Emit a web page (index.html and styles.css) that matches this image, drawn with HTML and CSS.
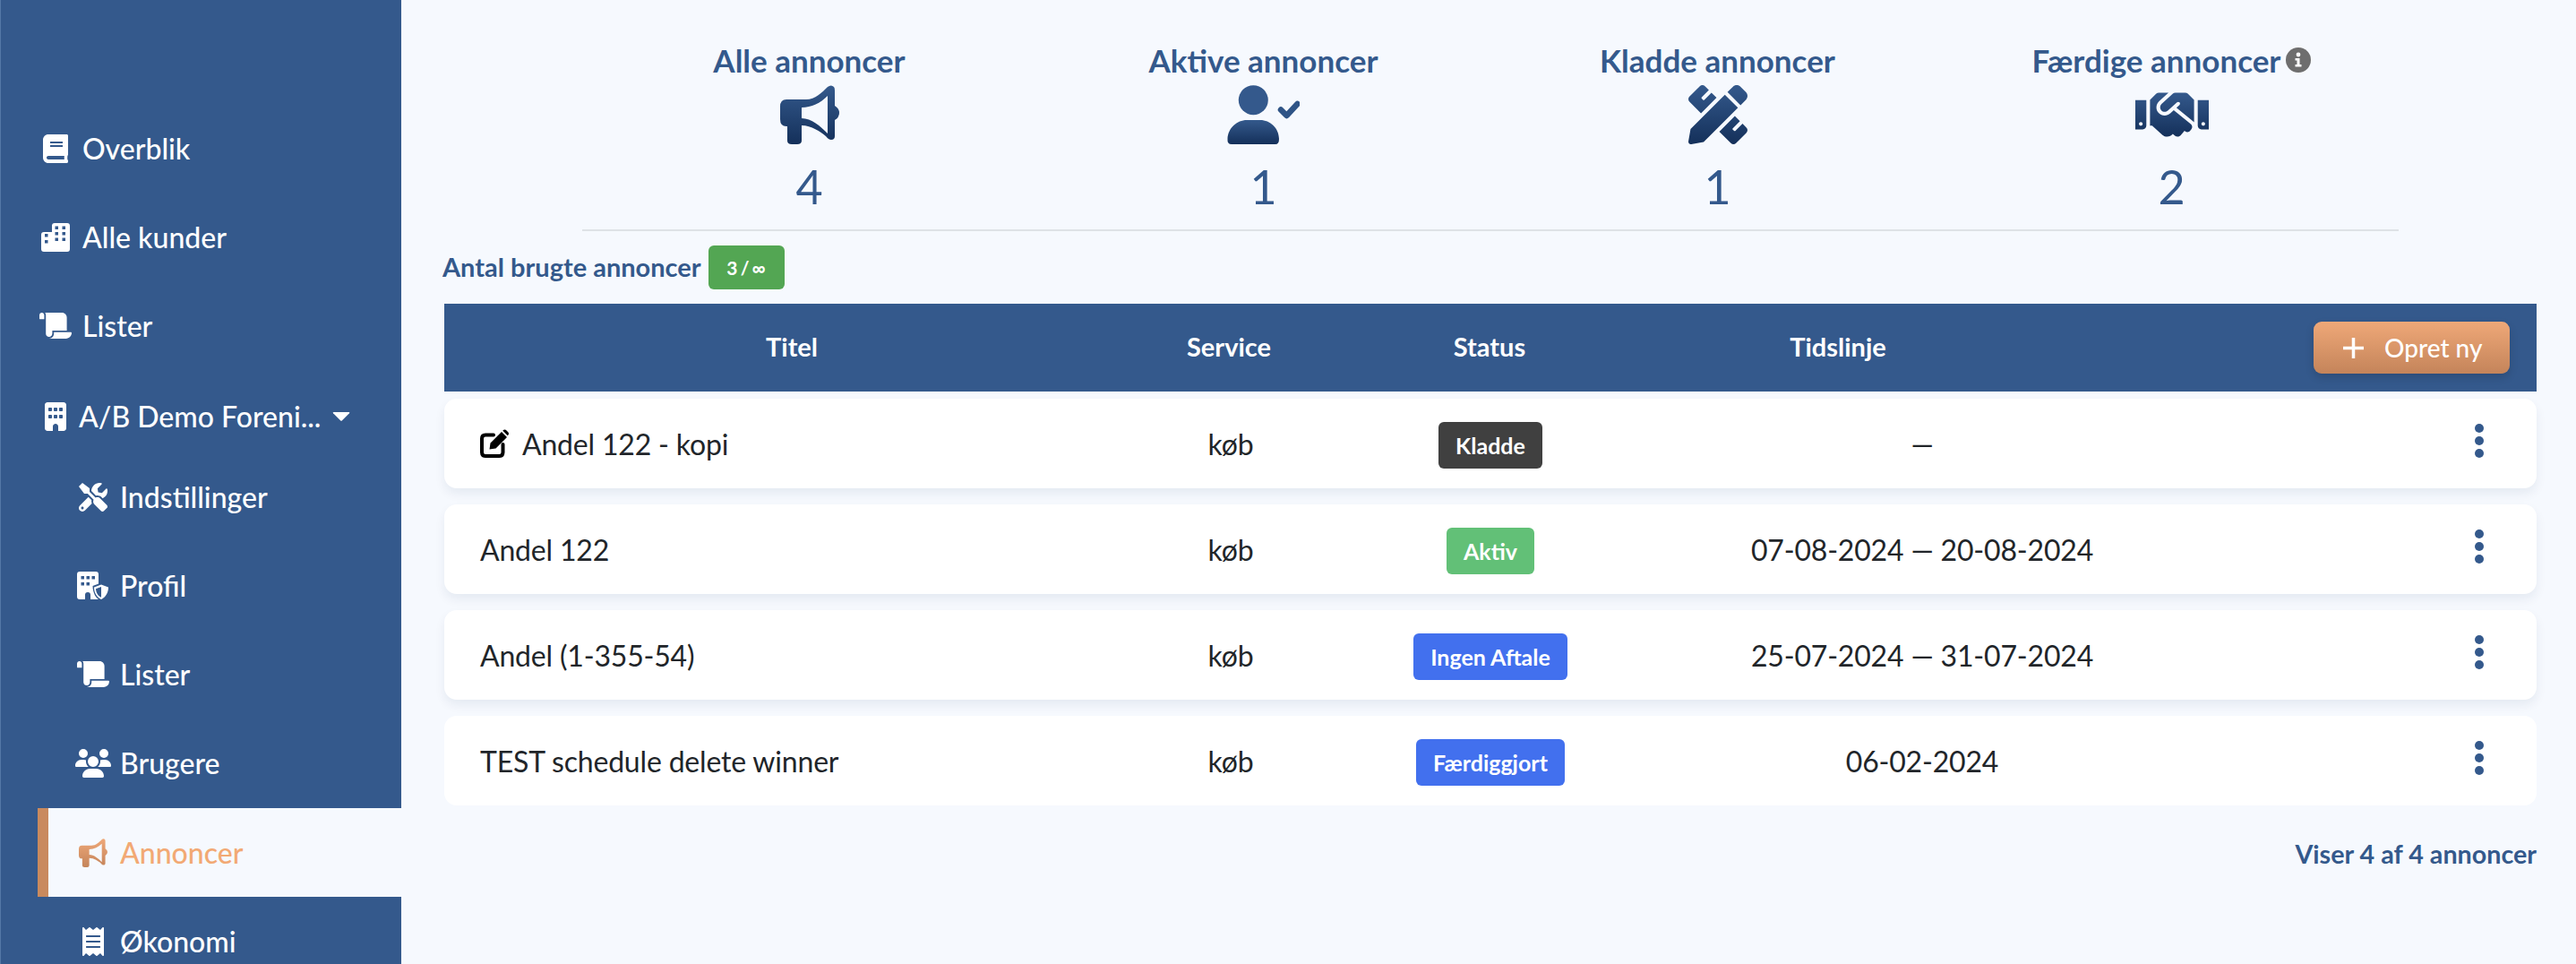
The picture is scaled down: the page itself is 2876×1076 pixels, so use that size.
FILE: index.html
```html
<!DOCTYPE html>
<html lang="da">
<head>
<meta charset="utf-8">
<title>Annoncer</title>
<link rel="stylesheet" href="styles.css">
</head>
<body>
<svg class="defs" width="0" height="0" aria-hidden="true">
  <defs>
    <linearGradient id="blue" x1="0" y1="0" x2="0" y2="1"><stop offset="0" stop-color="#34598c"/><stop offset="1" stop-color="#14305a"/></linearGradient>
    <linearGradient id="orange" x1="0" y1="0" x2="0" y2="1"><stop offset="0" stop-color="#efa878"/><stop offset="1" stop-color="#c4845a"/></linearGradient>
  </defs>
</svg>
<div class="app">
  <aside class="sidebar">
    <nav class="nav">
      <a class="item"><span class="cell"><svg class="ic-book" viewBox="0 0 448 512"><path d="M448 360V24c0-13.3-10.7-24-24-24H96C43 0 0 43 0 96v320c0 53 43 96 96 96h328c13.3 0 24-10.7 24-24v-16c0-7.5-3.5-14.3-8.9-18.7-4.2-15.4-4.2-59.3 0-74.7 5.4-4.3 8.9-11.1 8.9-18.6zM128 134c0-3.3 2.7-6 6-6h212c3.3 0 6 2.7 6 6v20c0 3.3-2.7 6-6 6H134c-3.3 0-6-2.7-6-6v-20zm0 64c0-3.3 2.7-6 6-6h212c3.3 0 6 2.7 6 6v20c0 3.3-2.7 6-6 6H134c-3.3 0-6-2.7-6-6v-20zm253.4 250H96c-17.7 0-32-14.3-32-32 0-17.6 14.4-32 32-32h285.4c-1.9 17.1-1.9 46.9 0 64z"/></svg></span>Overblik</a>
      <a class="item"><span class="cell"><svg class="ic-city" viewBox="0 0 32 32"><path fill-rule="evenodd" d="M3 10H12V3Q12 0 15 0H29Q32 0 32 3V29Q32 32 29 32H3Q0 32 0 29V13Q0 10 3 10ZM4 12V15.5H7.5V12ZM4 19V22.500H7.500V19ZM15.500 3.500V7H19V3.500ZM23.500 3.500V7H27V3.500ZM15.500 10V13.500H19V10ZM23.500 10V13.500H27V10ZM15.500 16.500V20H19V16.500ZM23.500 16.500V20H27V16.500Z"/></svg></span>Alle kunder</a>
      <a class="item"><span class="cell"><svg class="ic-scroll" viewBox="0 0 640 512"><path d="M48 0C21.53 0 0 21.53 0 48v64c0 8.84 7.16 16 16 16h80V48C96 21.53 74.47 0 48 0zm208 412.57V352h288V96c0-52.94-43.06-96-96-96H111.59C121.74 13.41 128 29.92 128 48v368c0 38.87 34.66 69.65 74.35 63.12C234.22 474.3 256 444.46 256 412.57zM288 384v32c0 52.93-43.06 96-96 96h336c61.86 0 112-50.14 112-112 0-8.84-7.16-16-16-16H288z"/></svg></span>Lister</a>
      <a class="item item-group"><span class="cell"><svg class="ic-building" viewBox="0 0 384 512"><path d="M48 0C21.5 0 0 21.5 0 48V464c0 26.5 21.5 48 48 48h96V432c0-26.5 21.5-48 48-48s48 21.5 48 48v80h96c26.5 0 48-21.5 48-48V48c0-26.500-21.500-48-48-48H48zM64 240c0-8.800 7.200-16 16-16h32c8.800 0 16 7.200 16 16v32c0 8.800-7.200 16-16 16H80c-8.800 0-16-7.200-16-16V240zm112-16h32c8.800 0 16 7.200 16 16v32c0 8.800-7.200 16-16 16H176c-8.800 0-16-7.200-16-16V240c0-8.800 7.200-16 16-16zm80 16c0-8.800 7.200-16 16-16h32c8.800 0 16 7.200 16 16v32c0 8.800-7.200 16-16 16H272c-8.800 0-16-7.200-16-16V240zM80 96h32c8.800 0 16 7.200 16 16v32c0 8.800-7.200 16-16 16H80c-8.800 0-16-7.200-16-16V112c0-8.800 7.200-16 16-16zm80 16c0-8.800 7.200-16 16-16h32c8.800 0 16 7.200 16 16v32c0 8.800-7.200 16-16 16H176c-8.800 0-16-7.200-16-16V112zM272 96h32c8.800 0 16 7.200 16 16v32c0 8.800-7.200 16-16 16H272c-8.800 0-16-7.200-16-16V112c0-8.800 7.200-16 16-16z"/></svg></span>A/B Demo Foreni...<svg class="caret" viewBox="0 0 20 10"><path d="M1.500 0H18.500Q20 0 19 1.200L11 9.300Q10 10.300 9 9.300L1 1.200Q0 0 1.500 0Z"/></svg></a>
      <div class="sub">
        <a class="item"><span class="cell"><svg class="ic-tools" viewBox="0 0 512 512"><path d="M501.1 395.700L384 278.600c-23.100-23.100-57.600-27.600-85.400-13.900L192 158.100V96L64 0 0 64l96 128h62.100l106.600 106.600c-13.600 27.800-9.200 62.300 13.900 85.400l117.100 117.100c14.600 14.600 38.200 14.600 52.700 0l52.700-52.700c14.500-14.600 14.500-38.200 0-52.700zM331.700 225c28.300 0 54.900 11 74.900 31l19.400 19.400c15.800-6.900 30.800-16.500 43.800-29.500 37.100-37.100 49.700-89.300 37.900-136.700-2.200-9-13.500-12.100-20.100-5.500l-74.400 74.400-67.900-11.300L334 98.900l74.400-74.400c6.600-6.600 3.400-17.900-5.700-20.200-47.400-11.700-99.600.9-136.600 37.900-28.500 28.500-41.900 66.100-41.200 103.600l82.100 82.100c8.100-1.900 16.500-2.900 24.700-2.900zm-103.900 82l-56.700-56.700L18.700 402.800c-25 25-25 65.500 0 90.500s65.500 25 90.500 0l123.600-123.600c-7.600-19.900-9.900-41.600-5-62.700zM64 472c-13.200 0-24-10.800-24-24 0-13.300 10.700-24 24-24s24 10.700 24 24c0 13.200-10.700 24-24 24z"/></svg></span>Indstillinger</a>
        <a class="item"><span class="cell"><svg class="ic-profile" viewBox="0 0 36 31"><path fill-rule="evenodd" d="M3 0H21Q24 0 24 3V31H15V26Q15 23 12 23T9 26V31H3Q0 31 0 28V3Q0 0 3 0ZM4.500 5V8.500H8V5ZM10.500 5V8.500H14V5ZM16.500 5V8.500H20V5ZM4.500 12V15.500H8V12ZM10.500 12V15.500H14V12Z"/><path class="shield-back" d="M27 12.500L36.500 16C36.500 24 33 30 27 33C21 30 17.500 24 17.500 16Z"/><path d="M27 14.500L35 17.500C35 23.500 32 28.500 27 31C22 28.500 19 23.500 19 17.500ZM27 17L21 19.200C21.200 23.500 23.500 27 27 28.800Z" fill-rule="evenodd"/></svg></span>Profil</a>
        <a class="item"><span class="cell"><svg class="ic-scroll" viewBox="0 0 640 512"><path d="M48 0C21.53 0 0 21.53 0 48v64c0 8.84 7.16 16 16 16h80V48C96 21.53 74.47 0 48 0zm208 412.57V352h288V96c0-52.94-43.06-96-96-96H111.59C121.74 13.41 128 29.92 128 48v368c0 38.87 34.66 69.65 74.35 63.12C234.22 474.3 256 444.46 256 412.57zM288 384v32c0 52.93-43.06 96-96 96h336c61.86 0 112-50.14 112-112 0-8.84-7.16-16-16-16H288z"/></svg></span>Lister</a>
        <a class="item"><span class="cell"><svg class="ic-users" viewBox="0 0 640 512"><path d="M144 0a80 80 0 1 1 0 160A80 80 0 1 1 144 0zM512 0a80 80 0 1 1 0 160A80 80 0 1 1 512 0zM0 298.700C0 239.800 47.800 192 106.700 192h42.700c15.900 0 31 3.500 44.600 9.700c-1.300 7.200-1.900 14.700-1.900 22.300c0 38.200 16.800 72.500 43.300 96c-.2 0-.4 0-.7 0H21.300C9.600 320 0 310.400 0 298.700zM405.300 320c-.2 0-.4 0-.7 0c26.600-23.500 43.300-57.800 43.300-96c0-7.600-.7-15-1.900-22.300c13.600-6.300 28.700-9.700 44.600-9.700h42.700C592.200 192 640 239.800 640 298.700c0 11.800-9.600 21.300-21.300 21.300H405.300zM224 224a96 96 0 1 1 192 0 96 96 0 1 1 -192 0zM128 485.300C128 411.700 187.700 352 261.300 352H378.700C452.300 352 512 411.700 512 485.300c0 14.700-11.900 26.700-26.700 26.700H154.700c-14.700 0-26.700-11.900-26.700-26.700z"/></svg></span>Brugere</a>
        <a class="item item-active"><span class="cell"><svg class="ic-horn" viewBox="21 10 66 66"><path fill="url(#orange)" fill-rule="evenodd" d="M28 26H50C60 26 68 18 74 12Q78 9 81 12Q82 13 82 16V33Q87 36 87 41Q87 46 82 49V67Q82 71 78 71Q75 71 72 67C66 62 56 55 45 55V72Q45 76 40 76H34Q29 76 29 72V56H28Q21 56 21 48V34Q21 26 28 26ZM45 35V47C56 47 66 56 74 64V22C66 30 56 35 45 35Z"/></svg></span>Annoncer</a>
        <a class="item"><span class="cell"><svg class="ic-receipt" viewBox="0 0 384 512"><path d="M358.400 3.200L320 48 265.600 3.200a15.900 15.900 0 0 0-19.200 0L192 48 137.600 3.200a15.900 15.900 0 0 0-19.200 0L64 48 25.600 3.200C15-4.700 0 2.800 0 16v480c0 13.200 15 20.700 25.600 12.800L64 464l54.400 44.800a15.900 15.900 0 0 0 19.200 0L192 464l54.400 44.800a15.900 15.900 0 0 0 19.200 0L320 464l38.400 44.800c10.500 7.900 25.600.4 25.600-12.800V16c0-13.200-15-20.700-25.600-12.800zM320 360c0 4.400-3.600 8-8 8H72c-4.400 0-8-3.600-8-8v-16c0-4.400 3.600-8 8-8h240c4.400 0 8 3.600 8 8v16zm0-96c0 4.400-3.600 8-8 8H72c-4.400 0-8-3.600-8-8v-16c0-4.400 3.600-8 8-8h240c4.400 0 8 3.600 8 8v16zm0-96c0 4.400-3.600 8-8 8H72c-4.400 0-8-3.600-8-8v-16c0-4.400 3.600-8 8-8h240c4.400 0 8 3.600 8 8v16z"/></svg></span>Økonomi</a>
      </div>
    </nav>
  </aside>
  <main class="main">
    <section class="stats">
      <div class="stat">
        <div class="stat-title">Alle annoncer</div>
        <svg class="stat-icon w66" viewBox="21 10 66 66"><path fill="url(#blue)" fill-rule="evenodd" d="M28 26H50C60 26 68 18 74 12Q78 9 81 12Q82 13 82 16V33Q87 36 87 41Q87 46 82 49V67Q82 71 78 71Q75 71 72 67C66 62 56 55 45 55V72Q45 76 40 76H34Q29 76 29 72V56H28Q21 56 21 48V34Q21 26 28 26ZM45 35V47C56 47 66 56 74 64V22C66 30 56 35 45 35Z"/></svg>
        <div class="stat-num">4</div>
      </div>
      <div class="stat">
        <div class="stat-title">Aktive annoncer</div>
        <svg class="stat-icon w81" viewBox="19 10 81 66"><circle cx="48.300" cy="26.700" r="16.500" fill="#34598c"/><path fill="url(#blue)" d="M19.500 70C20 58 30 49 41 49H56C67 49 77 58 77 70Q77 76 73 76H24Q19 76 19.500 70Z"/><path class="check" d="M79 37.500L85.500 44L97.500 31"/></svg>
        <div class="stat-num">1</div>
      </div>
      <div class="stat">
        <div class="stat-title">Kladde annoncer</div>
        <svg class="stat-icon w66" viewBox="0 0 512 512"><path fill="url(#blue)" d="M109.460 244.040l134.580-134.560-44.120-44.120-61.680 61.680a7.919 7.919 0 0 1-11.210 0l-11.210-11.210c-3.100-3.100-3.100-8.120 0-11.210l61.680-61.680-33.640-33.650C131.470-3.100 111.390-3.100 99 9.290L9.290 99c-12.380 12.390-12.390 32.470 0 44.860l100.170 100.180zm388.470-116.200c18.760-18.760 18.750-49.170 0-67.930l-45.250-45.250c-18.760-18.760-49.180-18.760-67.950 0l-46.020 46.010 113.200 113.200 46.020-46.030zM316.080 82.710l-297 296.960L.32 487.110c-2.530 14.490 10.090 27.110 24.590 24.560l107.450-18.840 296.950-297-113.230-113.120zm186.630 285.430l-33.640-33.640-61.680 61.680c-3.100 3.100-8.120 3.100-11.210 0l-11.210-11.210c-3.090-3.100-3.090-8.120 0-11.210l61.680-61.680-44.140-44.140L267.930 402.500l100.210 100.200c12.390 12.390 32.470 12.390 44.860 0l89.710-89.700c12.380-12.390 12.380-32.470 0-44.860z"/></svg>
        <div class="stat-num">1</div>
      </div>
      <div class="stat">
        <div class="stat-title">Færdige annoncer<svg class="info" viewBox="0 0 28 28"><circle cx="14" cy="14" r="14" fill="#6e6e6e"/><circle cx="14" cy="8" r="2.400" fill="#fff"/><path fill="#fff" d="M10.500 12H15.500V19H17.500V21.500H10.500V19H12.500V14.500H10.500Z"/></svg></div>
        <svg class="stat-icon w82" viewBox="0 0 640 512"><path fill="url(#blue)" d="M434.700 64h-85.900c-8 0-15.700 3-21.600 8.400l-98.300 90c-.1.1-.2.3-.3.4-16.600 15.600-16.300 40.500-2.100 56 12.700 13.900 39.400 17.600 56.100 2.700.1-.1.3-.1.4-.2l79.900-73.200c6.500-5.900 16.700-5.500 22.600 1 6 6.500 5.500 16.600-1 22.600l-26.100 23.900L504 313.800c2.900 2.400 5.500 5 7.900 7.700V128l-54.600-54.600c-5.900-6-14.100-9.400-22.600-9.400zM544 128.200v223.900c0 17.700 14.300 32 32 32h64V128.200h-96zm48 223.900c-8.800 0-16-7.200-16-16s7.200-16 16-16 16 7.200 16 16-7.200 16-16 16zM0 384h64c17.700 0 32-14.300 32-32V128.200H0V384zm48-63.900c8.800 0 16 7.200 16 16s-7.200 16-16 16-16-7.200-16-16c0-8.900 7.200-16 16-16zm435.900 18.600L334.600 217.500l-30 27.500c-29.700 27.100-75.200 24.500-101.700-4.400-26.900-29.400-24.800-74.900 4.400-101.700L289.100 64h-83.800c-8.500 0-16.600 3.400-22.600 9.400L128 128v223.900h18.300l90.500 81.900c27.400 22.300 67.700 18.100 90-9.300l.2-.2 17.900 15.500c15.900 13 39.400 10.500 52.300-5.400l31.400-38.600 5.400 4.400c13.700 11.100 33.900 9.100 45-4.700l9.500-11.700c11.200-13.800 9.100-33.900-4.600-45.100z"/></svg>
        <div class="stat-num">2</div>
      </div>
    </section>
    <div class="usage"><span class="usage-label">Antal brugte annoncer</span><span class="usage-badge">3 / ∞</span></div>
    <div class="thead">
      <div class="th">Titel</div>
      <div class="th">Service</div>
      <div class="th">Status</div>
      <div class="th">Tidslinje</div>
      <button class="btn"><svg class="plus" viewBox="0 0 23 23"><path d="M11.500 0V23M0 11.500H23"/></svg>Opret ny</button>
    </div>
    <div class="rows">
      <div class="row">
        <div class="title"><svg class="ic-edit" viewBox="0 0 32 32"><path class="edit-box" d="M15 6.500H6Q2 6.500 2 10.500V26Q2 30 6 30H21.500Q25.500 30 25.500 26V17"/><path class="edit-pen" d="M10.500 22.500L11.500 15.500L24 3L30 9L17.500 21.500ZM25.500 1.500Q27.500 -0.500 29.500 1.500L31 3Q33 5 31 7L30.800 7.200L25.300 1.700Z"/></svg>Andel 122 - kopi</div>
        <div class="cen">køb</div>
        <div class="cen"><span class="badge badge-draft">Kladde</span></div>
        <div class="cen">—</div>
        <div class="dots"><i></i><i></i><i></i></div>
      </div>
      <div class="row">
        <div class="title">Andel 122</div>
        <div class="cen">køb</div>
        <div class="cen"><span class="badge badge-active">Aktiv</span></div>
        <div class="cen">07-08-2024 — 20-08-2024</div>
        <div class="dots"><i></i><i></i><i></i></div>
      </div>
      <div class="row">
        <div class="title">Andel (1-355-54)</div>
        <div class="cen">køb</div>
        <div class="cen"><span class="badge badge-info">Ingen Aftale</span></div>
        <div class="cen">25-07-2024 — 31-07-2024</div>
        <div class="dots"><i></i><i></i><i></i></div>
      </div>
      <div class="row row-last">
        <div class="title">TEST schedule delete winner</div>
        <div class="cen">køb</div>
        <div class="cen"><span class="badge badge-info">Færdiggjort</span></div>
        <div class="cen">06-02-2024</div>
        <div class="dots"><i></i><i></i><i></i></div>
      </div>
    </div>
    <div class="foot">Viser 4 af 4 annoncer</div>
  </main>
</div>
</body>
</html>
```
FILE: styles.css
```css
* { box-sizing: border-box; }
html, body { margin: 0; height: 1076px; overflow: hidden; }
body { font-family: Lato, "Noto Sans", sans-serif; background: #f6f9fe; color: #212529; }
.defs { position: absolute; }
.app { display: flex; height: 1076px; }

.sidebar { width: 448px; flex: none; background: #34598c; border-left: 1px solid #5478a6; color: #fff; overflow: hidden; }
.nav { padding-top: 116px; margin-left: -1px; }
.item { display: flex; align-items: center; height: 99px; padding-left: 42px; font-size: 32px; font-weight: 500; gap: 10px; white-space: nowrap; }
.item svg { fill: currentColor; display: block; }
.cell { width: 40px; display: flex; justify-content: center; flex: none; }
.item-group { height: 92px; padding-top: 11px; padding-left: 44px; gap: 8px; }
.item-group .cell { width: 36px; }
.caret { width: 20px; height: 10px; margin-left: 5px; }
.sub .item { padding-left: 84px; }
.sub .item-active { background: #f6f9fe; color: #f2a974; margin: 1px 0 0 42px; border-left: 12px solid #c98a5e; padding-left: 30px; }
.ic-book { width: 28px; height: 32px; }
.ic-city { width: 32px; height: 32px; }
.ic-scroll { width: 36px; height: 29px; }
.ic-building { width: 24px; height: 32px; }
.ic-tools { width: 32px; height: 32px; }
.ic-profile { width: 36px; height: 31px; overflow: visible; }
.shield-back { fill: #34598c; }
.ic-users { width: 40px; height: 32px; }
.ic-horn { width: 32px; height: 32px; }
.ic-receipt { width: 24px; height: 32px; }

.main { flex: 1; min-width: 0; padding: 0 44px 0 48px; }
.stats { display: grid; grid-template-columns: repeat(4, 1fr); margin: 0 154px; padding-top: 47px; height: 258px; border-bottom: 2px solid #dee2e6; }
.stat { display: flex; flex-direction: column; align-items: center; color: #34598c; }
.stat-title { display: flex; align-items: center; height: 40px; font-size: 35px; font-weight: 700; line-height: 40px; white-space: nowrap; }
.info { width: 28px; height: 28px; margin-left: 6px; }
.stat-icon { display: block; height: 66px; margin-top: 8px; }
.w66 { width: 66px; }
.w81 { width: 81px; }
.w82 { width: 82px; }
.check { fill: none; stroke: #2f5486; stroke-width: 6.500; stroke-linecap: round; stroke-linejoin: round; }
.stat-num { font-size: 52px; line-height: 62px; margin-top: 16px; }

.usage { display: flex; align-items: center; gap: 8px; height: 49px; margin: 16px 0 16px -2px; color: #34598c; }
.usage-label { font-size: 29px; font-weight: 700; margin-top: -2px; }
.usage-badge { display: flex; align-items: center; justify-content: center; width: 85px; height: 49px; background: #53a653; color: #fff; border-radius: 6px; font-size: 21px; font-weight: 700; word-spacing: -2px; }

.thead { display: grid; grid-template-columns: 776px 200px 382px 396px 1fr; align-items: center; height: 98px; background: #34598c; color: #fff; }
.th { text-align: center; font-size: 29px; font-weight: 700; margin-top: -4px; }
.btn { justify-self: end; display: flex; align-items: center; gap: 23px; width: 219px; height: 58px; margin-right: 30px; padding: 0 0 0 33px; border: 0; border-radius: 9px; background: linear-gradient(#efa878, #c4845a); color: #fff; font: 500 28px Lato, sans-serif; box-shadow: 0 4px 10px rgba(0,0,0,.15); }
.plus { width: 23px; height: 23px; fill: none; stroke: #fff; stroke-width: 3.500; }

.rows { display: flex; flex-direction: column; gap: 18px; margin-top: 8px; }
.row { display: grid; grid-template-columns: 776px 204px 376px 588px 1fr; align-items: center; height: 100px; background: #fff; border-radius: 14px; box-shadow: 0 6px 12px rgba(20,40,80,.07); font-size: 32px; letter-spacing: -0.18px; }
.row-last { box-shadow: none; }
.title { display: flex; align-items: center; padding-left: 40px; white-space: nowrap; }
.ic-edit { width: 32px; height: 32px; margin-right: 15px; overflow: visible; }
.edit-box { fill: none; stroke: #000; stroke-width: 4; stroke-linecap: round; }
.edit-pen { fill: #000; }
.cen { text-align: center; }
.badge { display: inline-block; height: 52px; margin-top: 3px; padding: 0 19px; line-height: 52px; border-radius: 6px; color: #fff; font-size: 25px; font-weight: 700; letter-spacing: 0; vertical-align: middle; }
.badge-draft { background: #404040; }
.badge-active { background: #62c077; }
.badge-info { background: #4270ee; }
.dots { justify-self: end; display: flex; flex-direction: column; gap: 4px; margin-right: 59px; transform: translateY(-3px); }
.dots i { width: 10px; height: 10px; border-radius: 50%; background: #34598c; }

.foot { margin-top: 37px; text-align: right; color: #34598c; font-size: 28.700px; font-weight: 700; }
```
